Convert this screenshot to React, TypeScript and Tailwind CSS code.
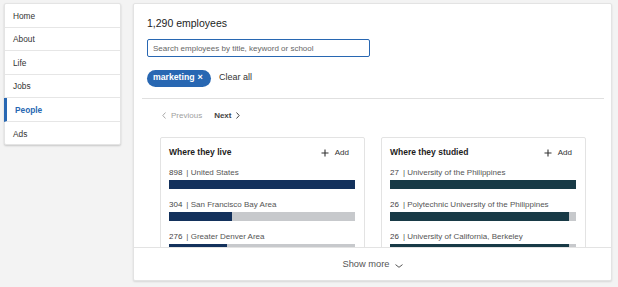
import React from "react";

const navItems = ["Home", "About", "Life", "Jobs", "People", "Ads"];

const live = [
  { n: "898", label: "United States", pct: 100 },
  { n: "304", label: "San Francisco Bay Area", pct: 34 },
  { n: "276", label: "Greater Denver Area", pct: 31 },
];

const studied = [
  { n: "27", label: "University of the Philippines", pct: 100 },
  { n: "26", label: "Polytechnic University of the Philippines", pct: 96 },
  { n: "26", label: "University of California, Berkeley", pct: 96 },
];

function Plus() {
  return (
    <svg width="8" height="8" viewBox="0 0 8 8" className="text-[#333]">
      <path d="M4 0.5v7M0.5 4h7" stroke="currentColor" strokeWidth="1.1" fill="none" />
    </svg>
  );
}

function InsightCard({
  title,
  rows,
  fill,
  addMr,
}: {
  title: string;
  rows: { n: string; label: string; pct: number }[];
  fill: string;
  addMr: string;
}) {
  return (
    <div className="w-[205px] shrink-0 rounded-[2px] border border-[#e3e3e3] bg-white pl-[8px] pr-[9px] pt-[8px] pb-4">
      <div className="flex h-[14px] items-center justify-between">
        <span className="text-[8.5px] font-bold text-[#1d1d1d]">{title}</span>
        <button className={`flex items-center gap-[6px] text-[8px] text-[#333] ${addMr}`}>
          <Plus />
          Add
        </button>
      </div>
      <div className="mt-[8px] flex flex-col gap-[11px]">
        {rows.map((r) => (
          <div key={r.label}>
            <div className="flex h-[10px] items-center text-[8px] leading-[10px] text-[#555]">
              <span className="text-[#444]">{r.n}</span>
              <span className="ml-[4px]">| {r.label}</span>
            </div>
            <div className="mt-[2px] h-[9px] w-full bg-[#c7c9cc]">
              <div className={`h-full ${fill}`} style={{ width: `${r.pct}%` }} />
            </div>
          </div>
        ))}
      </div>
    </div>
  );
}

export default function App() {
  return (
    <div className="flex h-[287px] w-[618px] gap-[12px] bg-[#f3f3f3] pl-[4px] pt-[3px] font-['Liberation_Sans',Arial,sans-serif]">
      {/* Left nav */}
      <nav className="h-[142px] w-[117px] shrink-0 self-start rounded-[2px] border border-[#e4e4e4] bg-white shadow-[0_1px_2px_rgba(0,0,0,0.18)]">
        {navItems.map((item, i) => {
          const active = item === "People";
          return (
            <div
              key={item}
              className={`flex h-[23.5px] items-center pl-[8px] pt-px text-[8.3px] ${
                i < navItems.length - 1 ? "border-b border-[#e6e6e6]" : ""
              } ${
                active
                  ? "-ml-px border-l-[3px] border-l-[#2867b2] pl-[6px] font-bold text-[#2867b2]"
                  : "text-[#333]"
              }`}
            >
              {item}
            </div>
          );
        })}
      </nav>

      {/* Main card */}
      <main className="flex h-[278px] w-[479px] flex-col rounded-[2px] border border-[#e3e3e3] bg-white shadow-[0_1px_2px_rgba(0,0,0,0.12)]">
        <div className="h-[243px] overflow-hidden">
          <div className="pl-[13px] pt-[12px]">
            <h1 className="h-[14px] text-[10.5px] leading-[14px] text-[#1d1d1d]">1,290 employees</h1>
            <input
              className="mt-[9px] h-[18px] w-[223px] rounded-[2px] border border-[#2867b2] px-[5px] text-[8px] text-[#333] outline-none placeholder:text-[#666]"
              placeholder="Search employees by title, keyword or school"
            />
            <div className="mt-[12px] flex h-[17px] items-center gap-[8px]">
              <span className="flex h-[17px] w-[64px] items-center gap-[3px] rounded-full bg-[#2867b2] pl-[6px] text-[8.7px] font-bold text-white">
                marketing
                <span className="text-[9px] font-bold">×</span>
              </span>
              <span className="text-[9px] text-[#333]">Clear all</span>
            </div>
          </div>
          <div className="ml-[8px] mr-[7px] mt-[11px] h-px bg-[#e0e0e0]" />

          <div className="pl-[26px]">
            <div className="mt-[10px] flex h-[14px] items-center pl-[2px] text-[8px]">
              <span className="flex items-center gap-[5px] text-[#a0a0a0]">
                <svg width="4" height="7" viewBox="0 0 4 7">
                  <path d="M3.5 0.5L0.8 3.5L3.5 6.5" stroke="currentColor" strokeWidth="0.9" fill="none" />
                </svg>
                Previous
              </span>
              <span className="ml-[12px] flex items-center gap-[5px] font-semibold text-[#444]">
                Next
                <svg width="4" height="7" viewBox="0 0 4 7">
                  <path d="M0.5 0.5L3.2 3.5L0.5 6.5" stroke="currentColor" strokeWidth="1" fill="none" />
                </svg>
              </span>
            </div>

            <div className="mt-[14px] flex gap-[16px]">
              <InsightCard title="Where they live" rows={live} fill="bg-[#13315c]" addMr="mr-[6px]" />
              <InsightCard title="Where they studied" rows={studied} fill="bg-[#183a46]" addMr="mr-[4px]" />
            </div>
          </div>
        </div>

        <div className="flex flex-1 items-center justify-center gap-[5px] border-t border-[#e3e3e3] pt-[1px] text-[9.3px] text-[#555]">
          Show more
          <svg width="8" height="4" viewBox="0 0 8 4" className="mt-[2px]">
            <path d="M0.5 0.6L4 3.3L7.5 0.6" stroke="currentColor" strokeWidth="1" fill="none" />
          </svg>
        </div>
      </main>
    </div>
  );
}
